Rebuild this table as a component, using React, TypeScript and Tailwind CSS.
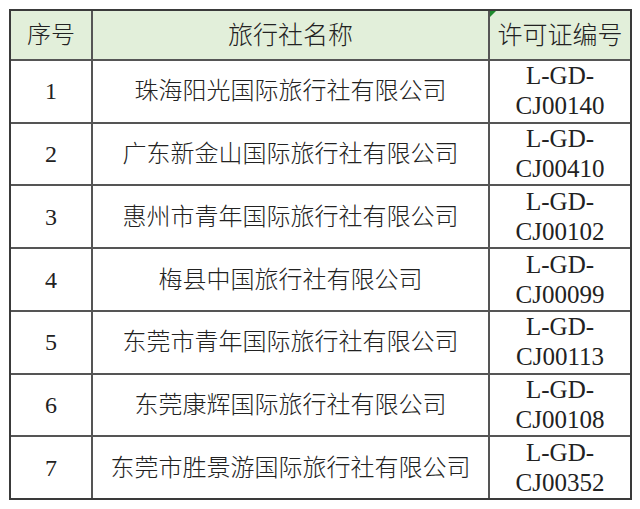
import React from "react";

const rows = [
  ["1", "珠海阳光国际旅行社有限公司", "CJ00140"],
  ["2", "广东新金山国际旅行社有限公司", "CJ00410"],
  ["3", "惠州市青年国际旅行社有限公司", "CJ00102"],
  ["4", "梅县中国旅行社有限公司", "CJ00099"],
  ["5", "东莞市青年国际旅行社有限公司", "CJ00113"],
  ["6", "东莞康辉国际旅行社有限公司", "CJ00108"],
  ["7", "东莞市胜景游国际旅行社有限公司", "CJ00352"],
];

const cjk = { fontFamily: '"Liberation Serif", "Noto Sans CJK SC", serif' };

export default function App() {
  return (
    <div className="w-[640px] h-[509px] bg-white pt-[9px] pl-[9px]">
      <div
        className="w-[623px] h-[491px] border-2 border-[#3a3a3a] flex flex-col text-[#222]"
        style={cjk}
      >
        <div className="h-[50px] shrink-0 grid grid-cols-[82px_397px_1fr] border-b-2 border-[#555] bg-[#e2efda]">
          <div className="border-r-2 border-[#555] flex items-center justify-center text-[24px] leading-none font-light">
            序号
          </div>
          <div className="border-r-2 border-[#555] flex items-center justify-center text-[25px] leading-none font-light">
            旅行社名称
          </div>
          <div className="relative flex items-center justify-center text-[25px] leading-none font-light">
            <span className="absolute left-0 top-0 w-0 h-0 border-t-[6px] border-r-[6px] border-t-[#1e8a2e] border-r-transparent" />
            许可证编号
          </div>
        </div>
        {rows.map(([n, name, code], i) => (
          <div
            key={n}
            className={
              "flex-1 min-h-0 grid grid-cols-[82px_397px_1fr] " +
              (i < rows.length - 1 ? "border-b-2 border-[#555]" : "")
            }
          >
            <div className="border-r-2 border-[#555] flex items-center justify-center text-[24px] leading-none">
              {n}
            </div>
            <div className="border-r-2 border-[#555] flex items-center justify-center text-[24px] leading-none font-light">
              {name}
            </div>
            <div className="flex flex-col items-center justify-center text-[25px] leading-[30px] overflow-visible">
              <span>L-GD-</span>
              <span>{code}</span>
            </div>
          </div>
        ))}
      </div>
    </div>
  );
}
